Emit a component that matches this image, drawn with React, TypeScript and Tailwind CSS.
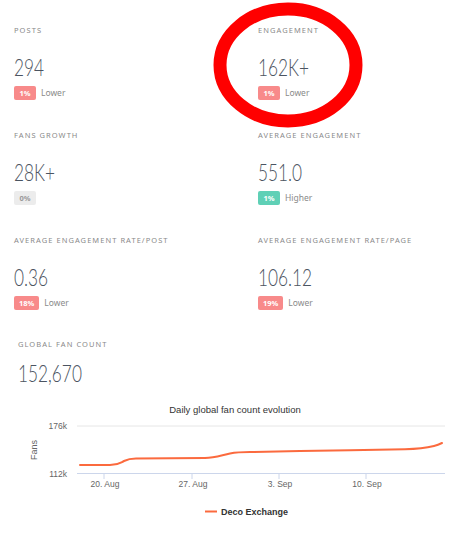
import React from "react";

type Badge = { text: string; kind: "red" | "green" | "gray"; note?: string };
type Stat = { label: string; value: string; badge: Badge };

const stats: Stat[] = [
  { label: "POSTS", value: "294", badge: { text: "1%", kind: "red", note: "Lower" } },
  { label: "ENGAGEMENT", value: "162K+", badge: { text: "1%", kind: "red", note: "Lower" } },
  { label: "FANS GROWTH", value: "28K+", badge: { text: "0%", kind: "gray" } },
  { label: "AVERAGE ENGAGEMENT", value: "551.0", badge: { text: "1%", kind: "green", note: "Higher" } },
  { label: "AVERAGE ENGAGEMENT RATE/POST", value: "0.36", badge: { text: "18%", kind: "red", note: "Lower" } },
  { label: "AVERAGE ENGAGEMENT RATE/PAGE", value: "106.12", badge: { text: "19%", kind: "red", note: "Lower" } },
];

const numFont = { fontFamily: "Lato, 'Open Sans', sans-serif", fontWeight: 300 } as const;
const labelFont = { fontFamily: "'Noto Sans', sans-serif" } as const;

function BigNumber({ text }: { text: string }) {
  return (
    <div className="h-[28px] whitespace-nowrap">
      <span
        className="inline-block origin-left scale-x-[0.72] text-[24px] leading-[28px] text-[#4b5461]"
        style={numFont}
      >
        {text}
      </span>
    </div>
  );
}

function BadgeView({ b }: { b: Badge }) {
  const cls =
    b.kind === "red"
      ? "bg-[#f88a8a] text-white"
      : b.kind === "green"
      ? "bg-[#5fd0b6] text-white"
      : "bg-[#ececec] text-[#9a9a9a]";
  return (
    <div className="flex items-center gap-[5px] h-[14px]">
      <span
        className={`${cls} h-[14px] px-[5px] rounded-[2px] text-[7.5px] font-bold leading-[14px] min-w-[22px] text-center`}
        style={labelFont}
      >
        {b.text}
      </span>
      {b.note && (
        <span className="text-[8.5px] text-[#8a8a8a]" style={labelFont}>
          {b.note}
        </span>
      )}
    </div>
  );
}

function StatCell({ s, right }: { s: Stat; right: boolean }) {
  return (
    <div className={`h-[105px] pt-[24px] flex flex-col ${right ? "pl-[258px]" : "pl-[14px]"}`}>
      <div
        className="text-[7.5px] leading-[12px] tracking-[0.14em] text-[#8a8a8a] whitespace-nowrap"
        style={labelFont}
      >
        {s.label}
      </div>
      <div className="mt-[17px]">
        <BigNumber text={s.value} />
      </div>
      <div className="mt-[5px]">
        <BadgeView b={s.badge} />
      </div>
    </div>
  );
}

const linePath =
  "M80 465 L110 465 C118 465 120 463 124 461 C128 459 130 458.5 136 458.5 L205 458 C215 458 222 455 230 453.5 C236 452.3 240 452 250 452 L300 451 L350 450.2 L405 449.2 C418 449 426 448 434 446 C438 445 440 444 442 443";

function Chart() {
  const oy = 395;
  const chartFont = "'Liberation Sans', Arial, sans-serif";
  const ticks = [
    { x: 104, label: "20. Aug" },
    { x: 192, label: "27. Aug" },
    { x: 279, label: "3. Sep" },
    { x: 366, label: "10. Sep" },
  ];
  return (
    <svg width={469} height={142} viewBox={`0 ${oy} 469 142`} className="block">
      <text x={235} y={413} textAnchor="middle" fontSize={9.5} fill="#333" fontFamily={chartFont}>
        Daily global fan count evolution
      </text>
      <line x1={77} x2={445} y1={426} y2={426} stroke="#e6e6e6" strokeWidth={1} />
      <line x1={77} x2={445} y1={473.5} y2={473.5} stroke="#ccd6eb" strokeWidth={1} />
      <text x={67} y={429} textAnchor="end" fontSize={8.5} fill="#666" fontFamily={chartFont}>
        176k
      </text>
      <text x={67} y={477} textAnchor="end" fontSize={8.5} fill="#666" fontFamily={chartFont}>
        112k
      </text>
      <text
        x={0}
        y={0}
        transform="translate(37 450) rotate(-90)"
        textAnchor="middle"
        fontSize={9}
        fill="#666"
        fontFamily={chartFont}
      >
        Fans
      </text>
      {ticks.map((t) => (
        <g key={t.label}>
          <line x1={t.x} x2={t.x} y1={474} y2={479} stroke="#ccd6eb" strokeWidth={1} />
          <text x={t.x + 1} y={487} textAnchor="middle" fontSize={8.5} fill="#666" fontFamily={chartFont}>
            {t.label}
          </text>
        </g>
      ))}
      <path d={linePath} fill="none" stroke="#fb6a3e" strokeWidth={2} strokeLinecap="round" strokeLinejoin="round" />
      <line x1={205} x2={217} y1={511.5} y2={511.5} stroke="#fb6a3e" strokeWidth={2} />
      <text x={221} y={515} fontSize={9} fontWeight="bold" fill="#333" fontFamily={chartFont}>
        Deco Exchange
      </text>
    </svg>
  );
}

export default function App() {
  return (
    <div className="relative w-[469px] h-[537px] bg-white overflow-hidden">
      <div className="grid grid-cols-2">
        {stats.map((s, i) => (
          <div key={s.label} className="relative">
            <div className={i % 2 === 1 ? "-ml-[234.5px]" : ""}>
              <StatCell s={s} right={i % 2 === 1} />
            </div>
          </div>
        ))}
      </div>
      <div className="h-[80px] pt-[23px] pl-[18px] flex flex-col">
        <div className="text-[7.5px] leading-[12px] tracking-[0.14em] text-[#8a8a8a]" style={labelFont}>
          GLOBAL FAN COUNT
        </div>
        <div className="mt-[9px]">
          <BigNumber text="152,670" />
        </div>
      </div>
      <Chart />
      <svg className="absolute left-[213px] top-[2px]" width={150} height={126} viewBox="0 0 150 126">
        <ellipse cx={75} cy={63} rx={68} ry={56} fill="none" stroke="#ff0000" strokeWidth={13} />
      </svg>
    </div>
  );
}
